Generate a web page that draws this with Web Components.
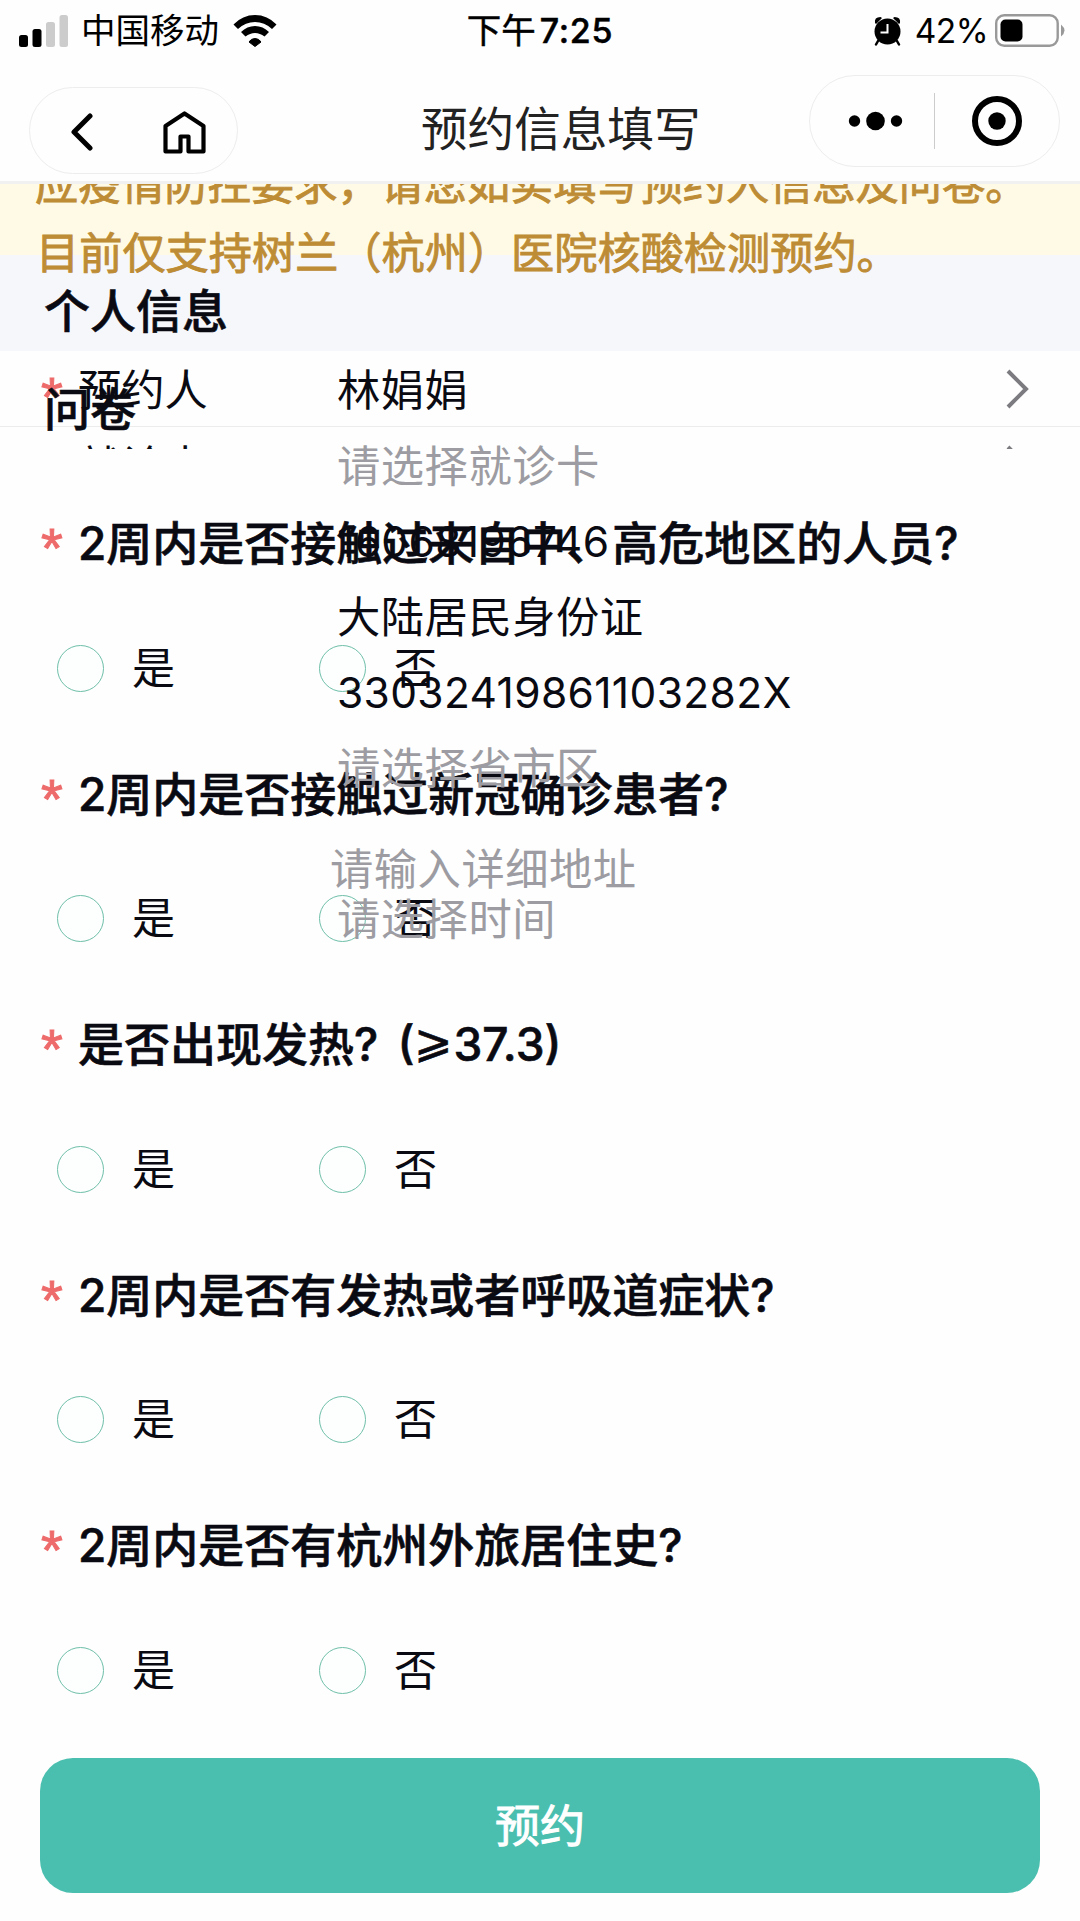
<!DOCTYPE html>
<html lang="zh-CN">
<head>
<meta charset="UTF-8">
<title>预约信息填写</title>
<style>
  body {
    margin: 0;
    width: 1080px;
    height: 1921px;
    overflow: hidden;
    background: #fefefe;
    color: #0a0a12;
    font-family: Inter, "Noto Sans CJK SC", sans-serif;
  }
</style>
</head>
<body>
<booking-page></booking-page>
<script>
class StatusBar extends HTMLElement {
  constructor() {
    super();
    this.attachShadow({ mode: "open" });
    this.shadowRoot.innerHTML = `
      <style>
        :host {
          display: grid;
          grid-template-columns: 1fr auto 1fr;
          align-items: center;
          height: 60px;
          padding: 0 15px 0 19px;
          color: #000;
          font-size: 34.5px;
          line-height: 60px;
        }
        .left, .right { display: flex; align-items: center; }
        .right { justify-content: flex-end; }
        .carrier { margin: 1px 14px 0 13px; }
        .time { display: flex; gap: 4px; margin-right: 4px; -webkit-text-stroke: 0.5px; }
        .clock { font-weight: 500; font-size: 34px; letter-spacing: 0.7px; }
        .percent { font-size: 33.5px; margin: 1px 7px 0 14px; letter-spacing: -0.6px; }
        svg { display: block; flex: none; }
      </style>
      <div class="left">
        <svg width="49" height="32" viewBox="0 0 49 32">
          <rect x="0" y="20" width="9" height="12" rx="2.5"/>
          <rect x="13.5" y="14" width="9" height="18" rx="2.5"/>
          <rect x="27" y="7" width="9" height="25" rx="2.5" fill="#ccc"/>
          <rect x="40.500" y="0" width="8.500" height="32" rx="2.5" fill="#ccc"/>
        </svg>
        <span class="carrier">中国移动</span>
        <svg width="44" height="32" viewBox="0 0 44 32">
          <path d="M0.500 9.500Q9.500 0 22 0T43.500 9.500L39 14Q31.500 7 22 7T5 14Z"/>
          <path d="M8 17Q14 11 22 11T36 17L31.500 21.500Q27 18 22 18T12.500 21.500Z"/>
          <path d="M16 27Q18 23.500 22 23.500T28 27L22 31.500Z" stroke="#000" stroke-linejoin="round"/>
        </svg>
      </div>
      <div class="time"><span>下午</span><span class="clock">7:25</span></div>
      <div class="right">
        <svg width="27" height="30" viewBox="0 0 27 30">
          <path d="M1 7Q0 1 6.500 1L8 2 2 8ZM26 7Q27 1 20.500 1L19 2 25 8Z"/>
          <path d="M4 25L2 28.500M23 25L25 28.500" stroke="#000" stroke-width="2.500" stroke-linecap="round"/>
          <circle cx="13.500" cy="15.500" r="13"/>
          <path d="M13.500 8V16.500H6.500" fill="none" stroke="#fff" stroke-width="2"/>
        </svg>
        <span class="percent">42%</span>
        <svg width="70" height="33" viewBox="0 0 70 33">
          <rect x="1.200" y="1.200" width="61.500" height="30.600" rx="8" fill="none" stroke="#999" stroke-width="2.400"/>
          <rect x="5.500" y="5.500" width="22" height="22" rx="5"/>
          <path d="M66 10.500Q73 16.500 66 22.500Z" fill="#999"/>
        </svg>
      </div>
    `;
  }
}
customElements.define("status-bar", StatusBar);

class NavBar extends HTMLElement {
  constructor() {
    super();
    this.attachShadow({ mode: "open" });
    this.shadowRoot.innerHTML = `
      <style>
        :host {
          display: grid;
          grid-template-columns: 421px 1fr auto;
          align-items: start;
          height: 124px;
          box-sizing: border-box;
          padding-right: 20px;
          border-bottom: 3px solid #f1f1f1;
        }
        .pill {
          display: flex;
          align-items: center;
          box-sizing: border-box;
          border: 1px solid #ededed;
          border-radius: 46px;
        }
        .nav { width: 209px; height: 87px; margin: 27px 0 0 29px; padding: 3px 0 0 41px; gap: 70px; }
        .menu { width: 251px; height: 92px; margin-top: 15px; padding-left: 38px; }
        .menu i { width: 1px; height: 56px; background: #ccc; margin: 0 36px 0 31px; }
        h1 { margin: 39px 0 0; font-size: 46.6px; line-height: 60px; font-weight: 400; color: #222; white-space: nowrap; }
        svg { display: block; flex: none; }
      </style>
      <div class="pill nav">
        <svg width="22" height="38" viewBox="0 0 22 38" fill="none" stroke="#000" stroke-width="5" stroke-linecap="round" stroke-linejoin="round">
          <path d="M19 3L3 19 19 35"/>
        </svg>
        <svg width="43" height="43" viewBox="0 0 43 43" fill="none" stroke="#000" stroke-width="4.200" stroke-linejoin="round">
          <path d="M21.500 2.500L40.500 15V40.500H25.500V25.500H17.500V40.500H2.500V15Z"/>
        </svg>
      </div>
      <h1><slot></slot></h1>
      <div class="pill menu">
        <svg width="55" height="20" viewBox="0 0 55 20">
          <circle cx="6.500" cy="10" r="5.700"/><circle cx="27.500" cy="10" r="9.300"/><circle cx="48.500" cy="10" r="5.700"/>
        </svg>
        <i></i>
        <svg width="52" height="52" viewBox="0 0 52 52">
          <circle cx="26" cy="26" r="22" fill="none" stroke="#000" stroke-width="6"/><circle cx="26" cy="26" r="8.700"/>
        </svg>
      </div>
    `;
  }
}
customElements.define("nav-bar", NavBar);

class NoticeBanner extends HTMLElement {
  constructor() {
    super();
    this.attachShadow({ mode: "open" });
    this.shadowRoot.innerHTML = `
      <style>
        :host {
          display: flex;
          height: 71px;
          background: #fffae6;
          color: #bd8c35;
          font-size: 43.2px;
          line-height: 69px;
          white-space: nowrap;
          -webkit-text-stroke: 0.9px;
        }
        div { margin: -34px 0 0 35px; }
      </style>
      <div><slot></slot></div>
    `;
  }
}
customElements.define("notice-banner", NoticeBanner);

class FormRow extends HTMLElement {
  constructor() {
    super();
    this.attachShadow({ mode: "open" });
  }

  connectedCallback() {
    const label = this.getAttribute("label") || "";
    this.shadowRoot.innerHTML = `
      <style>
        :host {
          display: grid;
          grid-template-columns: 78px 259px 1fr auto;
          height: 75.5px;
          line-height: 78px;
          font-size: 43.3px;
          white-space: nowrap;
        }
        :host([line]) { border-bottom: 1px solid #ececec; height: 74.5px; }
        :host([tight]) { height: 50px; line-height: 52px; }
        :host([area]) { height: 50px; line-height: 52px; padding-top: 39px; }
        :host([area]) .value { margin-left: -7px; }
        :host([cut]) .label, :host([cut]) svg { height: 22px; overflow: hidden; }
        .value { position: relative; z-index: 2; letter-spacing: 0.5px; }
        :host([empty]) .value { color: #9c9ca2; }
        :host([number]) .value { font-size: 42.5px; letter-spacing: 0.35px; line-height: 80px; }
        .star { padding-left: 41px; }
        svg { display: block; margin-right: 51px; }
      </style>
      <span class="star">${this.hasAttribute("required") ? "<red-star></red-star>" : ""}</span>
      <span class="label">${label}</span>
      <span class="value"><slot></slot></span>
      ${this.hasAttribute("arrow") ? `
        <svg width="23" height="75" viewBox="0 0 23 75" preserveAspectRatio="xMinYMin slice" fill="none" stroke="#7b7b80" stroke-width="4">
          <path d="M2 20L20 38 2 56"/>
        </svg>` : ""}
    `;
  }
}
customElements.define("form-row", FormRow);

class RedStar extends HTMLElement {
  constructor() {
    super();
    this.attachShadow({ mode: "open" });
    this.shadowRoot.innerHTML = `
      <style>
        :host {
          display: block;
          width: 23px;
          height: 60px;
          padding-top: 8px;
          color: #ee6b6b;
          font: 400 56px/75px "Liberation Sans", sans-serif;
          -webkit-text-stroke: 1px;
        }
      </style>*`;
  }
}
customElements.define("red-star", RedStar);

class SurveyQuestion extends HTMLElement {
  constructor() {
    super();
    this.attachShadow({ mode: "open" });
    this.shadowRoot.innerHTML = `
      <style>
        :host { display: block; height: 250.5px; white-space: nowrap; }
        .title {
          display: flex;
          height: 60px;
          line-height: 60px;
          padding-left: 41px;
          font-size: 46px;
          font-weight: 500;
        }
        .title span { -webkit-text-stroke: 0.6px; }
        red-star { flex: none; margin: -11px 14px 0 0; }
        .options { display: flex; margin-top: 71px; padding-left: 57px; }
        label { display: flex; align-items: center; width: 262px; height: 48px; font-size: 43px; line-height: 48px; }
        label span { margin-top: -1px; }
        i {
          box-sizing: border-box;
          width: 47px;
          height: 47px;
          margin-right: 28px;
          border: 1.5px solid #6fbfa9;
          border-radius: 50%;
          background: #fcfffe;
        }
      </style>
      <div class="title"><red-star></red-star><span><slot></slot></span></div>
      <div class="options">
        <label><i></i><span>是</span></label>
        <label><i></i><span>否</span></label>
      </div>
    `;
  }
}
customElements.define("survey-question", SurveyQuestion);

class SubmitButton extends HTMLElement {
  constructor() {
    super();
    this.attachShadow({ mode: "open" });
    this.shadowRoot.innerHTML = `
      <style>
        :host { display: block; padding: 0 40px; }
        button {
          display: block;
          width: 100%;
          height: 135px;
          border: 0;
          border-radius: 33px;
          background: #4bbfaf;
          color: #fff;
          font: inherit;
          font-size: 45px;
          padding: 0 0 4px;
          -webkit-text-stroke: 1px;
        }
      </style>
      <button><slot></slot></button>
    `;
  }
}
customElements.define("submit-button", SubmitButton);

class BookingPage extends HTMLElement {
  constructor() {
    super();
    this.attachShadow({ mode: "open" });
    this.shadowRoot.innerHTML = `
      <style>
        :host { display: block; }
        /* both sections share one cell: the survey lies over the form */
        main { display: grid; height: 1737px; overflow: hidden; }
        .info, .survey { grid-area: 1 / 1; }
        .survey { position: relative; z-index: 1; padding-top: 196px; }
        h2 { margin: 0; padding-left: 44px; font-size: 46px; line-height: 58px; font-weight: 500; -webkit-text-stroke: 0.6px; }
        .info h2 { height: 69px; padding-top: 27px; background: #f6f7fb; }
        /* the notice's second line runs on over the heading's band */
        notice-banner span { display: block; position: relative; }
        notice-banner span + span { padding-left: 1px; }
        .questions { margin-top: 75px; }
        .wide { word-spacing: 7px; }
        .wide span { display: inline-block; line-height: 1; transform: translateY(-4px); }
        submit-button { margin-top: -8px; }
      </style>
      <status-bar></status-bar>
      <nav-bar>预约信息填写</nav-bar>
      <main>
        <div class="info">
          <notice-banner><span>应疫情防控要求，请您如实填写预约人信息及问卷。</span><span>目前仅支持树兰（杭州）医院核酸检测预约。</span></notice-banner>
          <h2>个人信息</h2>
          <form-row label="预约人" required arrow line>林娟娟</form-row>
          <form-row label="就诊卡" cut arrow empty>请选择就诊卡</form-row>
          <form-row number>16068196746</form-row>
          <form-row>大陆居民身份证</form-row>
          <form-row number>33032419861103282X</form-row>
          <form-row empty>请选择省市区</form-row>
          <form-row area empty>请输入详细地址</form-row>
          <form-row tight empty>请选择时间</form-row>
        </div>
        <div class="survey">
          <h2>问卷</h2>
          <div class="questions">
            <survey-question>2周内是否接触过来自中、高危地区的人员?</survey-question>
            <survey-question>2周内是否接触过新冠确诊患者?</survey-question>
            <survey-question class="wide">是否出现发热? (<span>⩾</span>37.3)</survey-question>
            <survey-question>2周内是否有发热或者呼吸道症状?</survey-question>
            <survey-question>2周内是否有杭州外旅居住史?</survey-question>
          </div>
          <submit-button>预约</submit-button>
        </div>
      </main>
    `;
  }
}
customElements.define("booking-page", BookingPage);
</script>
</body>
</html>
